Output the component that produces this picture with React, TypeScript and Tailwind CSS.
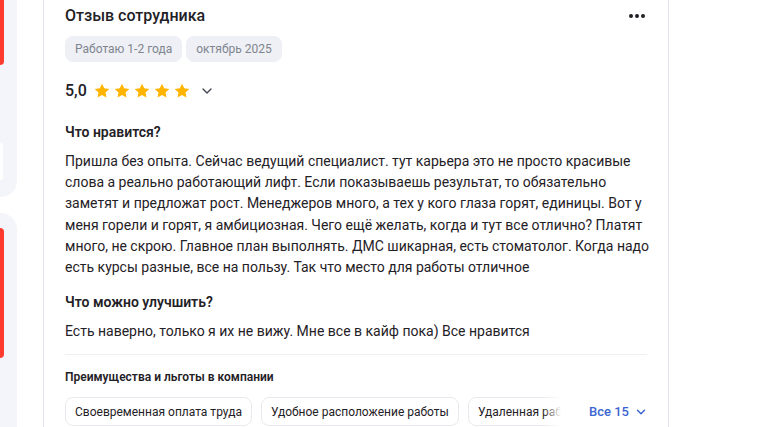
import { ChevronDown } from "lucide-react";

const liked = [
  "Пришла без опыта. Сейчас ведущий специалист. тут карьера это не просто красивые",
  "слова а реально работающий лифт. Если показываешь результат, то обязательно",
  "заметят и предложат рост. Менеджеров много, а тех у кого глаза горят, единицы. Вот у",
  "меня горели и горят, я амбициозная. Чего ещё желать, когда и тут все отлично? Платят",
  "много, не скрою. Главное план выполнять. ДМС шикарная, есть стоматолог. Когда надо",
  "есть курсы разные, все на пользу. Так что место для работы отличное",
];

const perks = ["Своевременная оплата труда", "Удобное расположение работы", "Удаленная работа"];

function Star() {
  return (
    <svg viewBox="0 0 24 24" className="w-[18px] h-[18px]" fill="#ffb400">
      <path d="M12 2.2l2.9 6.2 6.8.8-5 4.7 1.3 6.7L12 17.3l-6 3.3 1.3-6.7-5-4.7 6.8-.8z" />
    </svg>
  );
}

export default function App() {
  return (
    <div className="flex w-[768px] h-[427px] overflow-hidden bg-white text-[#1f2126]" style={{ fontFamily: "Roboto, 'Noto Sans', sans-serif" }}>
      {/* left strip */}
      <div className="flex flex-col w-[17px] shrink-0">
        <div className="h-[197px] bg-[#f4f5fa] rounded-br-[16px] flex flex-col">
          <div className="h-[65px] w-[4px] bg-[#ff3b30] rounded-br-[4px]" />
          <div className="mt-[78px] h-[37px] w-[3px] bg-white rounded-r-[3px]" />
        </div>
        <div className="mt-[16px] flex-1 bg-[#f4f5fa] rounded-tr-[16px] pt-[15px]">
          <div className="h-[130px] w-[4px] bg-[#ff3b30] rounded-r-[4px]" />
        </div>
      </div>
      <div className="w-[27px] shrink-0 border-r border-[#e3e4ec]" />

      {/* review */}
      <div className="w-[625px] shrink-0 border-r border-[#e3e4ec] pl-[21px] pr-[21px]">
        <div className="flex items-center justify-between h-[32px]">
          <h2 className="text-[16px] font-medium">Отзыв сотрудника</h2>
          <div className="flex gap-[2px] mr-[2px]">
            <span className="w-[4px] h-[4px] rounded-full bg-[#1f2126]" />
            <span className="w-[4px] h-[4px] rounded-full bg-[#1f2126]" />
            <span className="w-[4px] h-[4px] rounded-full bg-[#1f2126]" />
          </div>
        </div>
        <div className="flex gap-[4px] mt-[4px]">
          <span className="h-[26px] px-[10px] rounded-[8px] bg-[#eef0f5] text-[12px] text-[#80858f] flex items-center">Работаю 1-2 года</span>
          <span className="h-[26px] px-[10px] rounded-[8px] bg-[#eef0f5] text-[12px] text-[#80858f] flex items-center">октябрь 2025</span>
        </div>
        <div className="flex items-center mt-[16px] h-[26px]">
          <span className="text-[16px] font-medium mr-[6px]">5,0</span>
          <div className="flex gap-[2px]">
            <Star /><Star /><Star /><Star /><Star />
          </div>
          <ChevronDown className="w-[16px] h-[16px] ml-[8px] text-[#404550]" strokeWidth={2} />
        </div>

        <h3 className="text-[14px] font-semibold mt-[18px]">Что нравится?</h3>
        <div className="text-[14px] leading-[21.2px] mt-[8px]">
          {liked.map((l) => (
            <div key={l} className="whitespace-nowrap">{l}</div>
          ))}
        </div>

        <h3 className="text-[14px] font-semibold mt-[14px]">Что можно улучшить?</h3>
        <p className="text-[14px] leading-[21px] mt-[8px]">Есть наверно, только я их не вижу. Мне все в кайф пока) Все нравится</p>

        <div className="border-t border-[#eef0f3] mt-[12px]" />

        <h4 className="text-[12px] font-semibold mt-[13px]">Преимущества и льготы в компании</h4>
        <div className="flex items-center mt-[11px]">
          <div className="flex gap-[9px] w-[496px] shrink-0 overflow-hidden relative">
            {perks.map((p) => (
              <span key={p} className="shrink-0 whitespace-nowrap h-[29px] px-[9px] rounded-[8px] border border-[#e8e9ee] text-[12px] flex items-center">{p}</span>
            ))}
            <div className="absolute right-0 top-0 h-full w-[18px] bg-gradient-to-r from-white/0 to-white" />
          </div>
          <button className="ml-[28px] shrink-0 whitespace-nowrap flex items-center gap-[5px] text-[13px] font-medium text-[#3b66d1]">
            Все 15
            <ChevronDown className="w-[14px] h-[14px]" strokeWidth={2.5} />
          </button>
        </div>
      </div>
      <div className="flex-1" />
    </div>
  );
}
